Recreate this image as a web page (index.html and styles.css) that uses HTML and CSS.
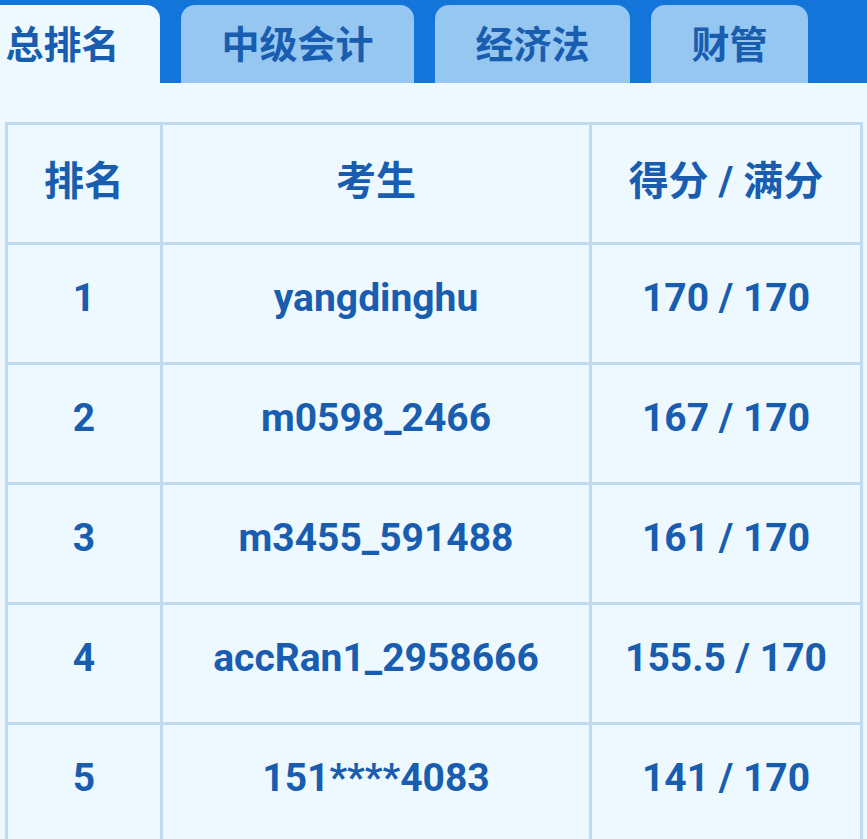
FILE: index.html
```html
<!DOCTYPE html>
<html lang="zh-CN">
<head>
<meta charset="utf-8">
<title>排名</title>
<link rel="stylesheet" href="styles.css">
</head>
<body>
<div class="tabbar">
  <div class="tabs">
    <div class="tab active">总排名</div>
    <div class="tab">中级会计</div>
    <div class="tab">经济法</div>
    <div class="tab">财管</div>
  </div>
</div>
<main class="content">
  <table class="rank">
    <colgroup>
      <col class="c-rank">
      <col class="c-name">
      <col class="c-score">
    </colgroup>
    <thead>
      <tr><th>排名</th><th>考生</th><th>得分 / 满分</th></tr>
    </thead>
    <tbody>
      <tr><td>1</td><td>yangdinghu</td><td>170 / 170</td></tr>
      <tr><td>2</td><td>m0598_2466</td><td>167 / 170</td></tr>
      <tr><td>3</td><td>m3455_591488</td><td>161 / 170</td></tr>
      <tr><td>4</td><td>accRan1_2958666</td><td>155.5 / 170</td></tr>
      <tr><td>5</td><td>151****4083</td><td>141 / 170</td></tr>
    </tbody>
  </table>
</main>
</body>
</html>
```

FILE: styles.css
```css
html, body {
  margin: 0;
  padding: 0;
  background: #edf9fe;
  overflow: hidden;
}
body {
  font-family: Roboto, "Noto Sans CJK SC", sans-serif;
  color: #195db0;
  font-weight: 700;
}
.tabbar {
  background: #1374d9;
  padding-top: 5px;
  overflow: hidden;
}
.tabs {
  display: flex;
  gap: 21px;
  margin-left: -35px;
}
.tab {
  flex: none;
  height: 78px;
  padding: 0 40.5px;
  background: #95c7f0;
  border-radius: 14px 14px 0 0;
  font-family: "Noto Sans CJK SC", sans-serif;
  font-size: 38px;
  line-height: 74px;
  white-space: nowrap;
}
.tab.active {
  background: #edf9fe;
}
.content {
  padding: 39px 4px 0 5px;
}
.rank {
  width: 855px;
  border-collapse: collapse;
  table-layout: fixed;
  border: 3px solid #c0daee;
}
.c-rank { width: 155px; }
.c-name { width: 429px; }
.c-score { width: 271px; }
.rank th, .rank td {
  border: 3px solid #c0daee;
  height: 105px;
  padding: 0 0 12px;
  text-align: center;
  font-size: 39px;
  white-space: nowrap;
}
.rank th {
  font-family: Roboto, "Noto Sans CJK SC", sans-serif;
  font-size: 40px;
}
```
